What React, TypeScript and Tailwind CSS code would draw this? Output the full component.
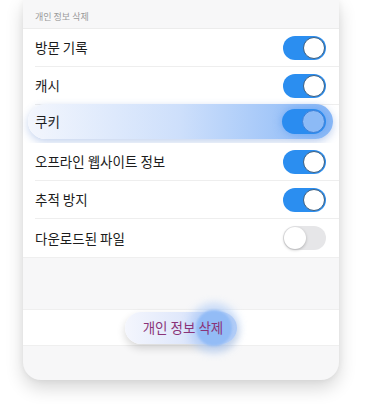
import React from "react";

const font = { fontFamily: '"Noto Sans CJK KR", "Noto Sans", sans-serif' };

function Toggle({ on }: { on: boolean }) {
  if (!on) {
    return (
      <div className="flex h-[24px] w-[43px] items-center justify-start rounded-full bg-[#e6e6e8] p-[1px]">
        <div className="h-[22px] w-[22px] rounded-full bg-white shadow-[0_1px_3px_rgba(0,0,0,0.25)]" />
      </div>
    );
  }
  return (
    <div className="flex h-[24px] w-[43px] items-center justify-end rounded-full bg-[#2b8ef0] p-[1px]">
      <div className="h-[22px] w-[22px] rounded-full border border-[#3d5f80] bg-white" />
    </div>
  );
}

function Row({ label, on, last }: { label: string; on: boolean; last?: boolean }) {
  return (
    <div className="h-[38px] bg-white pl-[12px]">
      <div
        className={`flex h-full items-center justify-between pr-[13px] ${last ? "" : "border-b border-[#eeeeee]"}`}
      >
        <span className="text-[13.5px] text-[#1c1c1c]">{label}</span>
        <Toggle on={on} />
      </div>
    </div>
  );
}

export default function App() {
  return (
    <div className="h-[404px] w-[367px] overflow-hidden bg-white" style={font}>
      <div className="ml-[23px] flex h-[380px] w-[316px] flex-col rounded-b-[18px] bg-[#f7f7f8] shadow-[0_8px_18px_rgba(0,0,0,0.16),0_0_6px_rgba(0,0,0,0.06)]">
        <div className="flex h-[29px] items-end border-b border-[#ececec] pb-[5px] pl-[12px]">
          <span className="text-[9px] text-[#9a9a9a]">개인 정보 삭제</span>
        </div>
        <Row label="방문 기록" on />
        <Row label="캐시" on />
        <div className="flex h-[38px] items-start bg-white px-[5px] pr-[6px]">
          <div className="-mt-[1px] flex h-[35px] flex-1 items-center justify-between rounded-full bg-gradient-to-r from-[#f3f6fd] via-[#cddffb] to-[#88b7f6] px-[7px] shadow-[0_3px_8px_rgba(60,110,200,0.3)]">
            <span className="text-[13.5px] text-[#1c1c1c]">쿠키</span>
            <div className="flex h-[25px] w-[44px] items-center justify-end rounded-full bg-[#2a8cf0] p-[1px] shadow-[0_0_8px_rgba(80,150,240,0.6)]">
              <div className="h-[23px] w-[23px] rounded-full border border-[#3b7fd8] bg-[#8cbaf6]" />
            </div>
          </div>
        </div>
        <Row label="오프라인 웹사이트 정보" on />
        <Row label="추적 방지" on />
        <Row label="다운로드된 파일" on={false} last />
        <div className="h-[52px] border-t border-[#efefef]" />
        <div className="flex h-[37px] items-center justify-center border-y border-[#efefef] bg-white">
          <div className="relative h-[32px] w-[112px] rounded-full bg-gradient-to-r from-[#f4f6fd] via-[#e0e8fb] to-[#b4cdf6] shadow-[0_4px_8px_rgba(0,0,0,0.16)]">
            <div className="absolute left-[64px] top-[-9px] h-[50px] w-[50px] rounded-full bg-[#a9c8f7] opacity-60 blur-[4px]" />
            <div className="absolute left-[71px] top-[-2px] h-[36px] w-[36px] rounded-full bg-[#93bcf6] blur-[1px]" />
            <div className="relative flex h-full items-center justify-center pl-[4px]">
              <span className="text-[13.5px] text-[#8a3478]">개인 정보 삭제</span>
            </div>
          </div>
        </div>
        <div className="flex-1" />
      </div>
    </div>
  );
}
